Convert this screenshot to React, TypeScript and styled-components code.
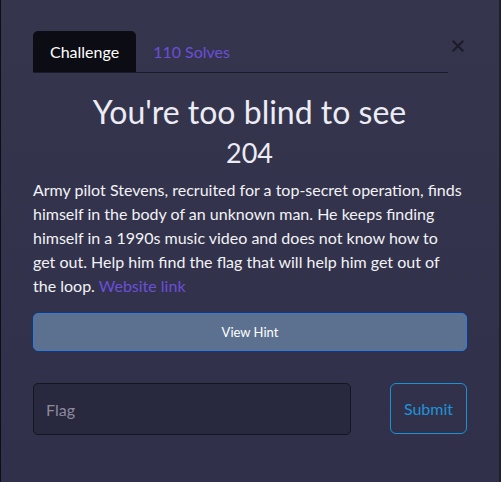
import React from "react";
import styled, { createGlobalStyle } from "styled-components";

const Global = createGlobalStyle`
  html, body { margin: 0; padding: 0; }
  body {
    background: #33324b;
    font-family: "Segoe UI", Lato, "Noto Sans", sans-serif;
  }
`;

const Modal = styled.div`
  box-sizing: border-box;
  width: 501px;
  height: 482px;
  background: linear-gradient(#36354e, #30304a);
  border-left: 1px solid #0e0e16;
  border-right: 2px solid #1e1e2c;
  padding: 31px 33px 0 32px;
  display: flex;
  flex-direction: column;
`;

const Header = styled.div`
  display: flex;
  align-items: flex-start;
`;

const TabBar = styled.div`
  display: flex;
  align-items: stretch;
  width: 417px;
  border-bottom: 1px solid #1c1b29;
`;

const Tab = styled.div<{ $active?: boolean }>`
  height: 41px;
  box-sizing: border-box;
  padding: 0 17px 0 17px;
  display: flex;
  align-items: center;
  font-size: 16px;
  border-radius: 5px 5px 0 0;
  background: ${(p) => (p.$active ? "#0c0c15" : "transparent")};
  color: ${(p) => (p.$active ? "#ffffff" : "#6a4fd9")};
`;

const Close = styled.div`
  margin-left: 2px;
  margin-top: 7px;
  width: 16px;
  height: 16px;
  display: flex;
  align-items: center;
  justify-content: center;
`;

const Title = styled.h1`
  margin: 19px 0 0;
  text-align: center;
  font-weight: 400;
  font-size: 32px;
  line-height: 40px;
  color: #ececf4;
`;

const Value = styled.div`
  text-align: center;
  font-size: 27px;
  line-height: 32px;
  margin-top: 5px;
  color: #ececf4;
`;

const Description = styled.p`
  margin: 9px 0 0;
  font-size: 16px;
  line-height: 24px;
  color: #f2f2f6;
`;

const Link = styled.a`
  color: #6a4fd9;
  text-decoration: none;
`;

const HintButton = styled.button`
  margin: 15px 0 0;
  height: 38px;
  width: 434px;
  background: #5c7190;
  border: 1px solid #2b7de6;
  border-radius: 5px;
  color: #ffffff;
  font-family: inherit;
  font-size: 13px;
`;

const SubmitRow = styled.div`
  margin: 32px 0 0;
  display: flex;
  justify-content: space-between;
  width: 434px;
`;

const FlagInput = styled.input`
  box-sizing: border-box;
  width: 318px;
  height: 52px;
  background: #28283f;
  border: 1px solid #15151f;
  border-radius: 5px;
  padding: 0 12px;
  font-family: inherit;
  font-size: 16px;
  color: #ffffff;
  &::placeholder { color: #8d8a9c; }
  outline: none;
`;

const SubmitButton = styled.button`
  box-sizing: border-box;
  width: 77px;
  height: 51px;
  background: transparent;
  border: 1px solid #1a92d4;
  border-radius: 6px;
  color: #1f93d9;
  font-family: inherit;
  font-size: 16px;
`;

export default function App() {
  return (
    <>
      <Global />
      <Modal>
        <Header>
          <TabBar>
            <Tab $active>Challenge</Tab>
            <Tab>110 Solves</Tab>
          </TabBar>
          <Close>
            <svg width="12" height="12" viewBox="0 0 12 12">
              <path d="M1.5 1.5 L10.5 10.5 M10.5 1.5 L1.5 10.5" stroke="#1c1c2a" strokeWidth="2.2" strokeLinecap="square" />
            </svg>
          </Close>
        </Header>
        <Title>You're too blind to see</Title>
        <Value>204</Value>
        <Description>
          Army pilot Stevens, recruited for a top-secret operation, finds<br />
          himself in the body of an unknown man. He keeps finding<br />
          himself in a 1990s music video and does not know how to<br />
          get out. Help him find the flag that will help him get out of<br />
          the loop. <Link href="#">Website link</Link>
        </Description>
        <HintButton>View Hint</HintButton>
        <SubmitRow>
          <FlagInput placeholder="Flag" />
          <SubmitButton>Submit</SubmitButton>
        </SubmitRow>
      </Modal>
    </>
  );
}
